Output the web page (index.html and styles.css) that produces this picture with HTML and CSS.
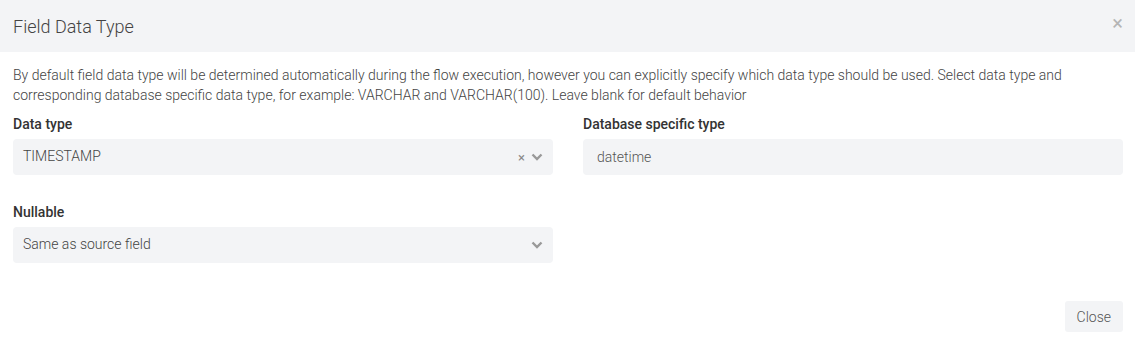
FILE: index.html
```html
<!DOCTYPE html>
<html lang="en">
<head>
  <meta charset="UTF-8">
  <title>Field Data Type</title>
  <link rel="stylesheet" href="styles.css">
</head>
<body>
  <div class="modal">
    <div class="modal-header">
      <h4 class="modal-title">Field Data Type</h4>
      <span class="modal-close">&times;</span>
    </div>

    <div class="modal-body">
      <p class="hint">By default field data type will be determined automatically during the flow execution, however you can explicitly specify which data type should be used. Select data type and corresponding database specific data type, for example: VARCHAR and VARCHAR(100). Leave blank for default behavior</p>

      <div class="form-grid">
        <div class="field">
          <label>Data type</label>
          <div class="select">
            <span class="select-value">TIMESTAMP</span>
            <span class="select-clear">&times;</span>
            <svg class="chevron" width="12" height="8" viewBox="0 0 12 8"><path d="M1.5 1.5 L6 6 L10.5 1.5" fill="none" stroke="#999" stroke-width="2.4"/></svg>
          </div>
        </div>
        <div class="field">
          <label>Database specific type</label>
          <div class="input">datetime</div>
        </div>
        <div class="field">
          <label>Nullable</label>
          <div class="select">
            <span class="select-value">Same as source field</span>
            <svg class="chevron" width="12" height="8" viewBox="0 0 12 8"><path d="M1.5 1.5 L6 6 L10.5 1.5" fill="none" stroke="#999" stroke-width="2.4"/></svg>
          </div>
        </div>
      </div>
    </div>

    <div class="modal-footer">
      <button class="btn">Close</button>
    </div>
  </div>
</body>
</html>
```

FILE: styles.css
```css
body {
  margin: 0;
  font-family: Roboto, "Liberation Sans", sans-serif;
  font-weight: 300;
  background: #ffffff;
  color: #555;
}
.modal-header {
  height: 52px;
  background: #f3f4f6;
  display: flex;
  align-items: center;
  justify-content: space-between;
  padding: 0 12px 0 13px;
}
.modal-title {
  margin: 0;
  font-size: 18px;
  font-weight: 300;
  color: #444;
}
.modal-close {
  font-size: 20px;
  font-weight: 400;
  color: #b5b5b5;
  line-height: 1;
  margin-top: -6px;
}
.modal-body {
  padding: 13px 12px 0 13px;
}
.hint {
  margin: 0;
  font-size: 14px;
  line-height: 20px;
  color: #444;
}
.form-grid {
  margin-top: 9px;
  display: grid;
  grid-template-columns: 540px 540px;
  column-gap: 30px;
  row-gap: 27px;
}
.field label {
  display: block;
  font-size: 14px;
  line-height: 20px;
  font-weight: 500;
  color: #333;
  margin-bottom: 5px;
}
.select, .input {
  height: 36px;
  box-sizing: border-box;
  background: #f3f4f6;
  border-radius: 4px;
  display: flex;
  align-items: center;
  font-size: 14px;
  color: #444;
}
.select {
  padding: 0 10px 0 10px;
}
.input {
  padding: 0 14px;
  color: #555;
}
.select-value {
  flex: 1;
  margin-top: -2px;
}
.select-clear {
  font-size: 13px;
  font-weight: 400;
  color: #888;
  margin-right: 6px;
}
.chevron {
  display: block;
}
.modal-footer {
  display: flex;
  justify-content: flex-end;
  padding: 38px 12px 0 12px;
}
.btn {
  height: 31px;
  padding: 0 12px;
  font-family: Roboto, "Liberation Sans", sans-serif;
  font-weight: 300;
  font-size: 14px;
  color: #555;
  background: #f3f4f6;
  border: none;
  border-radius: 3px;
}
```
